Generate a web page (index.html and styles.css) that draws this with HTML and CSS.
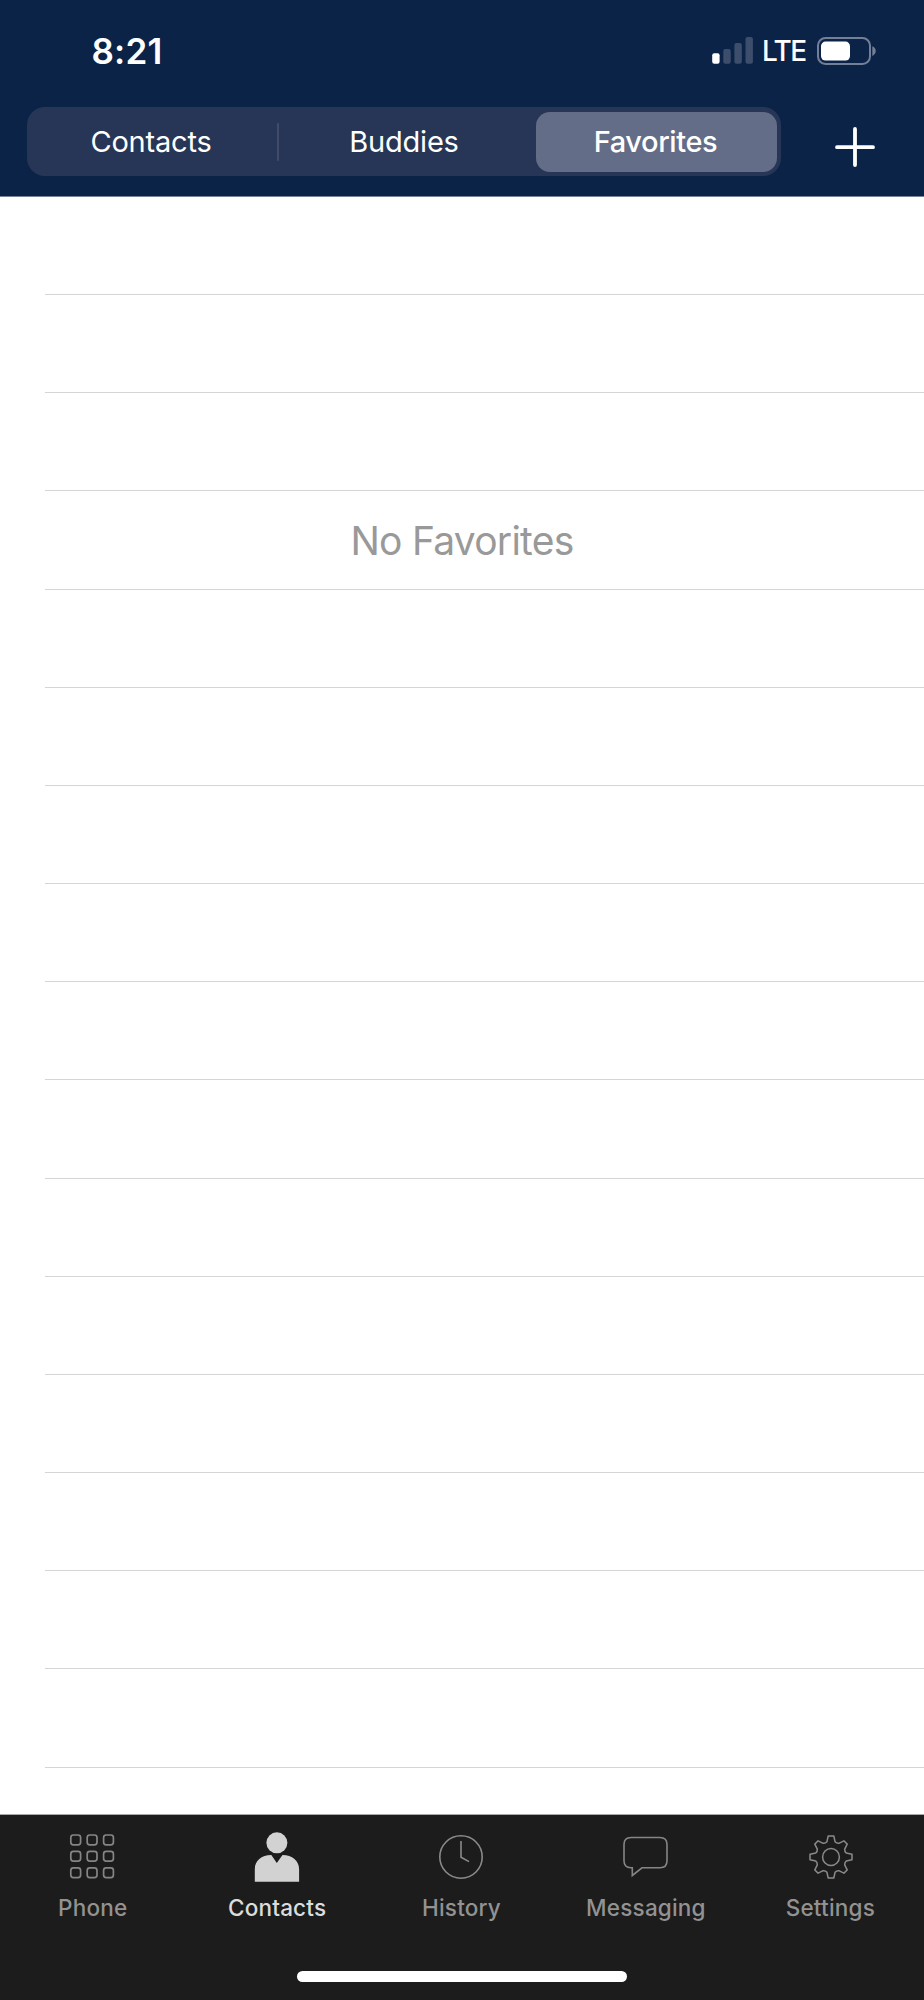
FILE: index.html
```html
<!DOCTYPE html>
<html lang="en">
<head>
<meta charset="utf-8">
<title>Favorites</title>
<link rel="stylesheet" href="styles.css">
</head>
<body>
<div class="screen">
  <header class="header">
    <div class="status">
      <span class="time">8:21</span>
      <div class="indicators">
        <svg class="signal" width="42" height="27" viewBox="0 0 42 27"><rect x="0.2" y="16.3" width="7.4" height="10.4" rx="2" fill="#fff"/><g fill="#3d4e6c"><rect x="11.3" y="12" width="7.4" height="14.7" rx="2"/><rect x="22.4" y="6" width="7.4" height="20.7" rx="2"/><rect x="33.5" y="0" width="7.4" height="26.7" rx="2"/></g></svg>
        <span class="network">LTE</span>
        <svg class="battery" width="60" height="28" viewBox="0 0 60 28"><rect x="1" y="1" width="52" height="26" rx="7.5" fill="none" stroke="#737f96" stroke-width="2"/><rect x="4" y="4.6" width="29" height="19" rx="4.5" fill="#fff"/><path d="M55.3 9.3Q58.7 10.8 58.7 14T55.3 18.9Z" fill="#737f96"/></svg>
      </div>
    </div>
    <div class="toolbar">
      <nav class="segments">
        <span class="segment">Contacts</span>
        <span class="divider"></span>
        <span class="segment segment-buddies">Buddies</span>
        <span class="segment segment-active">Favorites</span>
      </nav>
      <svg class="add" width="42" height="42" viewBox="0 0 42 42"><path d="M21 3V39M3 21.2H39" fill="none" stroke="#fff" stroke-width="3.8" stroke-linecap="round"/></svg>
    </div>
  </header>
  <main class="list">
    <div class="row"></div>
    <div class="row"></div>
    <div class="row"></div>
    <div class="row"><span class="empty">No Favorites</span></div>
    <div class="row"></div>
    <div class="row"></div>
    <div class="row"></div>
    <div class="row"></div>
    <div class="row"></div>
    <div class="row"></div>
    <div class="row"></div>
    <div class="row"></div>
    <div class="row"></div>
    <div class="row"></div>
    <div class="row"></div>
    <div class="row"></div>
  </main>
  <footer class="footer">
    <nav class="tabs">
      <div class="tab">
        <svg class="icon" width="52" height="54" viewBox="-0.3 0 52 54"><g fill="none" stroke="#858585" stroke-width="1.7"><rect x="4.5" y="5" width="9.8" height="9.8" rx="2.6"/><rect x="20.9" y="5" width="9.8" height="9.8" rx="2.6"/><rect x="37.3" y="5" width="9.8" height="9.8" rx="2.6"/><rect x="4.5" y="21.4" width="9.8" height="9.8" rx="2.6"/><rect x="20.9" y="21.4" width="9.8" height="9.8" rx="2.6"/><rect x="37.3" y="21.4" width="9.8" height="9.8" rx="2.6"/><rect x="4.5" y="37.8" width="9.8" height="9.8" rx="2.6"/><rect x="20.9" y="37.8" width="9.8" height="9.8" rx="2.6"/><rect x="37.3" y="37.8" width="9.8" height="9.8" rx="2.6"/></g></svg>
        <span class="label">Phone</span>
      </div>
      <div class="tab tab-active">
        <svg class="icon" width="52" height="54" viewBox="-0.3 0 52 54"><g fill="#d2d2d2"><circle cx="25.6" cy="12.8" r="10.5"/><path d="M3.5 51.8V39C3.5 31 10 25 20 25L25.5 33L31.2 25C41 25 47.8 31 47.8 39V51.8Z"/></g></svg>
        <span class="label">Contacts</span>
      </div>
      <div class="tab">
        <svg class="icon" width="52" height="54" viewBox="0 0 52 54"><g fill="none" stroke="#8a8a8a" stroke-width="1.6"><circle cx="26" cy="27" r="21.2"/><path d="M26 11V27.2L34 31.6"/></g></svg>
        <span class="label">History</span>
      </div>
      <div class="tab">
        <svg class="icon" width="52" height="54" viewBox="-0.5 0 52 54"><path d="M11.5 7.5H40.5Q47.5 7.5 47.5 14.5V30.8Q47.5 37.8 40.5 37.8H22.5L12.8 45.5V37.8H11.5Q4.5 37.8 4.5 30.8V14.5Q4.5 7.5 11.5 7.5Z" fill="none" stroke="#858585" stroke-width="1.6"/></svg>
        <span class="label">Messaging</span>
      </div>
      <div class="tab">
        <svg class="icon" width="52" height="54" viewBox="-1 0 52 54"><g transform="translate(26 27)" fill="none" stroke="#8a8a8a" stroke-width="1.5" stroke-linejoin="round"><circle r="8.4"/><path d="M-2.8-21H2.8L4.1-15.2Q5.5-13.5 7.8-13.7L12.9-16.2L16.2-12.9L13.7-7.8Q13.5-5.5 15.2-4.1L21-2.8V2.8L15.2 4.1Q13.5 5.5 13.7 7.8L16.2 12.9L12.9 16.2L7.8 13.7Q5.5 13.5 4.1 15.2L2.8 21H-2.8L-4.1 15.2Q-5.5 13.5-7.8 13.7L-12.9 16.2L-16.2 12.9L-13.7 7.8Q-13.5 5.5-15.2 4.1L-21 2.8V-2.8L-15.2-4.1Q-13.5-5.5-13.7-7.8L-16.2-12.9L-12.9-16.2L-7.8-13.7Q-5.5-13.5-4.1-15.2Z"/></g></svg>
        <span class="label">Settings</span>
      </div>
    </nav>
    <div class="home"></div>
  </footer>
</div>
</body>
</html>
```
FILE: styles.css
```css
* { box-sizing: border-box; }
body { margin: 0; font-family: Inter, "Liberation Sans", sans-serif; background: #fff; }
svg { display: block; flex: none; }
.screen { width: 924px; height: 2000px; display: flex; flex-direction: column; overflow: hidden; }
.header { height: 197px; flex: none; background: #0c2348; border-bottom: 1px solid #77849a; color: #fff; }
.status { height: 107px; padding: 29px 47px 0 91.5px; display: flex; justify-content: space-between; }
.time { margin-top: 1px; font-size: 35px; line-height: 43px; font-weight: 600; letter-spacing: 0.2px; }
.indicators { display: flex; height: 43px; }
.signal { margin-top: 8px; }
.network { margin: 1px 0 0 8px; width: 43px; font-size: 28px; line-height: 43px; font-weight: 500; letter-spacing: -1.6px; white-space: nowrap; }
.battery { margin: 8px 0 0 12px; }
.toolbar { display: flex; padding-left: 27px; }
.segments { width: 754px; height: 69px; flex: none; border-radius: 18px; background: #273656; padding: 5px 4px 4px; display: flex; align-items: center; }
.segment { flex: none; width: 242px; padding-right: 2px; text-align: center; font-size: 29px; line-height: 60px; letter-spacing: -0.2px; }
.divider { flex: none; width: 2px; height: 38px; margin: 0 5px 0 4px; background: #414d68; border-radius: 1px; }
.segment-buddies { margin-right: 10px; }
.segment-active { width: 241px; height: 60px; border-radius: 14px; background: #636d87; font-weight: 500; letter-spacing: -0.4px; }
.add { margin: 19px 0 0 53px; }
.list { flex: 1; min-height: 0; padding-left: 45px; }
.row { height: 98.15625px; border-bottom: 1px solid #d5d5d5; display: flex; align-items: center; justify-content: center; padding-right: 45px; }
.empty { padding-top: 1px; font-size: 39px; line-height: 48px; color: #999; letter-spacing: -0.75px; white-space: nowrap; }
.footer { height: 186px; flex: none; background: #1c1c1c; border-top: 1px solid #a8aaa9; }
.tabs { display: flex; height: 156px; padding-top: 15px; margin-right: 2px; }
.tab { flex: 1 1 0; display: flex; flex-direction: column; align-items: center; color: #929292; }
.tab-active { color: #dcdcdc; }
.label { margin-top: 10px; padding-left: 1px; font-size: 22.5px; line-height: 28px; font-weight: 500; letter-spacing: 0.2px; white-space: nowrap; }
.home { width: 330px; height: 11px; margin: 0 auto; border-radius: 6px; background: #fff; }
```
